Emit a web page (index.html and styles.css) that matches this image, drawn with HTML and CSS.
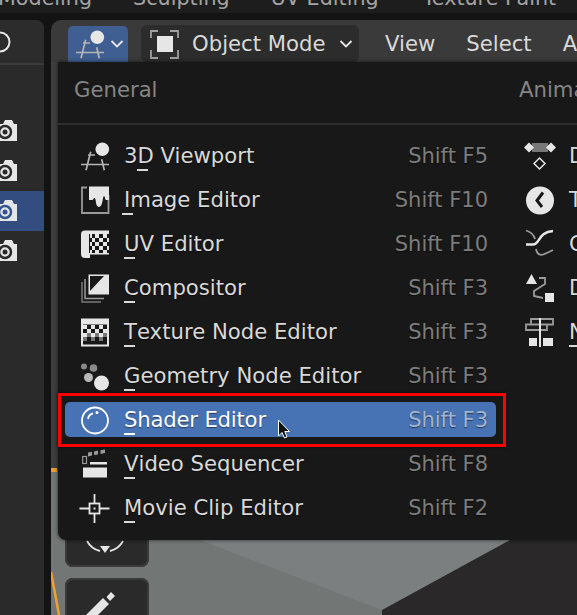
FILE: index.html
```html
<!DOCTYPE html>
<html lang="en">
<head>
<meta charset="UTF-8">
<title>Editor Type Menu</title>
<link rel="stylesheet" href="styles.css">
</head>
<body>

<div class="topbar">
    <span class="tab tab-model">Modeling</span>
    <span class="tab">Sculpting</span>
    <span class="tab">UV Editing</span>
    <span class="tab tab-last">Texture Paint</span>
</div>

<div class="workspace">
    <aside class="outliner">
        <div class="outliner-head">
            <svg class="ring" width="12" height="22" viewBox="0 0 12 22"><circle cx="0" cy="11" r="9.500" fill="none" stroke="#e6e6e6" stroke-width="2"/></svg>
        </div>
        <div class="cam-row"><svg width="18" height="24" viewBox="0 0 18 24"><use href="#cam"/></svg></div>
        <div class="cam-row"><svg width="18" height="24" viewBox="0 0 18 24"><use href="#cam"/></svg></div>
        <div class="cam-row cam-on"><svg width="18" height="24" viewBox="0 0 18 24"><path d="M0 5H3L5 1H12L14 5H17V22H0Z" fill="#e6e6e6"/><circle cx="5" cy="13" r="6" fill="none" stroke="#34558f" stroke-width="2.500"/><circle cx="5" cy="13" r="2.500" fill="#34558f"/></svg></div>
        <div class="cam-row"><svg width="18" height="24" viewBox="0 0 18 24"><use href="#cam"/></svg></div>
    </aside>

    <main class="viewport">
        <header class="vp-header">
            <button class="editor-btn">
                <svg width="30" height="30" viewBox="0 0 30 30"><use href="#i-view3d"/></svg>
                <svg width="14" height="10" viewBox="0 0 14 10"><path d="M1.500 2L7 7.500L12.500 2" fill="none" stroke="#e6e6e6" stroke-width="1.800"/></svg>
            </button>
            <button class="mode-btn">
                <svg width="30" height="30" viewBox="0 0 30 30">
                    <path d="M9 2H2V9M21 2H29V9M9 29H2V21M21 29H29V21" fill="none" stroke="#a0a0a0" stroke-width="1.800"/>
                    <rect x="8" y="7" width="16" height="16" fill="#e6e6e6"/>
                </svg>
                <span>Object Mode</span>
                <svg width="14" height="10" viewBox="0 0 14 10"><path d="M1.500 2L7 7.500L12.500 2" fill="none" stroke="#e6e6e6" stroke-width="1.800"/></svg>
            </button>
            <span class="vp-link link-view">View</span>
            <span class="vp-link">Select</span>
            <span class="vp-link">Add</span>
        </header>

        <div class="scene">
            <svg class="scene-bg" width="526" height="553" viewBox="0 0 526 553">
                <rect width="526" height="553" fill="#7b7f80"/>
                <polygon points="0,0 149,478 331,548 331,553 0,553" fill="#727675"/>
                <polygon points="331,548 459,478 526,478 526,553 331,553" fill="#2a2828"/>
                <rect width="8" height="408" fill="#3e3e3e"/>
                <path d="M0 408H6" stroke="#f0a030" stroke-width="4"/>
                <path d="M0 510L8 553" stroke="#f0a030" stroke-width="2.500"/>
            </svg>
            <div class="tools">
                <div class="tool">
                    <svg width="84" height="84" viewBox="0 0 84 84">
                        <path d="M22 58A20 20 0 0 0 35 68M45 68A20 20 0 0 0 58 58" fill="none" stroke="#e6e6e6" stroke-width="1.800"/>
                        <polygon points="35,63 45,63 40,70" fill="#e6e6e6"/>
                    </svg>
                </div>
                <div class="tool">
                    <svg width="84" height="84" viewBox="0 0 84 84">
                        <path d="M38 20L44 26L22 48L16 42Z" fill="#e6e6e6"/>
                        <path d="M46 14L50 18L45 23L41.500 19Z" fill="#e6e6e6"/>
                    </svg>
                </div>
            </div>
        </div>

        <div class="menu">
            <section class="col col-general">
                <h2 class="col-head">General</h2>
                <div class="rows">
                    <div class="row"><svg class="ico" width="30" height="30" viewBox="0 0 30 30"><use href="#i-view3d"/></svg><span class="label">3<u>D</u> Viewport</span><span class="keys">Shift F5</span></div>
                    <div class="row"><svg class="ico" width="30" height="30" viewBox="0 0 30 30">
                        <path d="M7 2.500H2V28H28.500V10" fill="none" stroke="#9a9a9a" stroke-width="1.800"/>
                        <path d="M9 1.500H29V15H26C25 15 25 11 24 11C22.500 11 23 22 19 22C15 22 16.500 13 14.500 13C13 13 14 15 12 15H9Z" fill="#e6e6e6"/>
                    </svg><span class="label"><u class="tight">I</u>mage Editor</span><span class="keys">Shift F10</span></div>
                    <div class="row"><svg class="ico" width="30" height="30" viewBox="0 0 30 30">
                        <path d="M1 5Q1 1.500 5 1.500H29V5H9V25H29V25H10V29H5Q1 29 1 25Z" fill="#e6e6e6"/>
                        <path d="M10 5h2v4h-2zM15 5h4v4h-4zM23 5h4v4h-4zM10 13h2v4h-2zM15 13h4v4h-4zM23 13h4v4h-4zM10 21h2v4h-2zM15 21h4v4h-4zM23 21h4v4h-4z" fill="#e6e6e6"/>
                        <path d="M12 9h3v4h-3zM19 9h4v4h-4zM27 9h2v4h-2zM12 17h3v4h-3zM19 17h4v4h-4zM27 17h2v4h-2z" fill="#e6e6e6"/>
                        <rect x="9" y="24" width="20" height="1.500" fill="#e6e6e6"/>
                    </svg><span class="label"><u>U</u>V Editor</span><span class="keys">Shift F10</span></div>
                    <div class="row"><svg class="ico" width="30" height="30" viewBox="0 0 30 30">
                        <path d="M2 9V29H21" fill="none" stroke="#7a7a7a" stroke-width="1.500"/>
                        <path d="M5 6V25.500H24" fill="none" stroke="#9a9a9a" stroke-width="1.500"/>
                        <rect x="8.500" y="1.500" width="20.500" height="20" fill="#e6e6e6"/>
                        <polygon points="10,3 24,3 10,18" fill="#181818"/>
                    </svg><span class="label"><u>C</u>ompositor</span><span class="keys">Shift F3</span></div>
                    <div class="row"><svg class="ico" width="30" height="30" viewBox="0 0 30 30">
                        <rect x="1" y="1.500" width="28" height="28" fill="#e6e6e6"/>
                        <rect x="3" y="7.500" width="24" height="20" fill="#181818"/>
                        <path d="M3 8h4v4h-4zM11 8h4v4h-4zM19 8h4v4h-4zM7 12h4v4h-4zM15 12h4v4h-4zM23 12h4v4h-4zM3 16h4v4h-4zM11 16h4v4h-4zM19 16h4v4h-4z" fill="#e6e6e6"/>
                        <path d="M7 16h4v4h-4zM15 16h4v4h-4zM23 16h4v4h-4zM3 20h4v4h-4zM11 20h4v4h-4zM19 20h4v4h-4z" fill="#777"/>
                    </svg><span class="label"><u>T</u>exture Node Editor</span><span class="keys">Shift F3</span></div>
                    <div class="row"><svg class="ico" width="30" height="30" viewBox="0 0 30 30">
                        <circle cx="4" cy="5.500" r="3" fill="#8a8a8a"/>
                        <circle cx="13.500" cy="7" r="3.800" fill="#8a8a8a"/>
                        <circle cx="8.500" cy="16.500" r="4.500" fill="#b8b8b8"/>
                        <circle cx="21.500" cy="22" r="7.500" fill="#e6e6e6"/>
                    </svg><span class="label"><u>G</u>eometry Node Editor</span><span class="keys">Shift F3</span></div>
                    <div class="row row-hot"><svg class="ico" width="30" height="30" viewBox="0 0 30 30">
                        <circle cx="15" cy="15.500" r="13" fill="none" stroke="#fff" stroke-width="1.800"/>
                        <path d="M8 14C8.500 11 10.500 9 13 8.500" fill="none" stroke="#fff" stroke-width="1.800"/>
                        <circle cx="17" cy="7.500" r="1.500" fill="#fff"/>
                    </svg><span class="label"><u>S</u>hader Editor</span><span class="keys">Shift F3</span>
                        <svg class="pointer" width="14" height="20" viewBox="0 0 14 20"><path d="M1.500 1V17L5 13.500L7.500 19L10 18L7.800 12.500H12.500Z" fill="#111" stroke="#fff" stroke-width="1"/></svg>
                    </div>
                    <div class="row"><svg class="ico" width="30" height="30" viewBox="0 0 30 30">
                        <path d="M8 3.500L12 2.700V6.500L8 7.500ZM14 2.400L18 1.600V5.400L14 6.100ZM20.500 1.200L25 .5V4L20.500 5Z" fill="#9a9a9a"/>
                        <rect x="2.700" y="7.500" width="3.800" height="7" fill="none" stroke="#9a9a9a" stroke-width="1.200"/>
                        <rect x="10" y="13" width="17" height="2.500" fill="#e6e6e6"/>
                        <rect x="3" y="18.500" width="24" height="10" fill="#e6e6e6"/>
                    </svg><span class="label"><u>V</u>ideo Sequencer</span><span class="keys">Shift F8</span></div>
                    <div class="row"><svg class="ico" width="30" height="30" viewBox="0 0 30 30">
                        <path d="M14.500 1V10M14.500 21V30M-.5 15.500H9M20 15.500H29.500" stroke="#e6e6e6" stroke-width="1.800"/>
                        <rect x="9.500" y="10.500" width="10" height="10" fill="none" stroke="#e6e6e6" stroke-width="1.800"/>
                        <rect x="13.500" y="14.500" width="2" height="2" fill="#e6e6e6"/>
                    </svg><span class="label"><u>M</u>ovie Clip Editor</span><span class="keys">Shift F2</span></div>
                </div>
            </section>
            <section class="col">
                <h2 class="col-head col-head-second">Animation</h2>
                <div class="rows">
                    <div class="row"><svg class="ico" width="30" height="30" viewBox="0 0 30 30">
                        <rect x="7" y="2" width="16" height="9" fill="#777"/>
                        <polygon points="4,1.500 9,6.500 4,11.500 -1,6.500" fill="#e6e6e6"/>
                        <polygon points="26,1.500 31,6.500 26,11.500 21,6.500" fill="#e6e6e6"/>
                        <polygon points="14.500,17 20,22.500 14.500,28 9,22.500" fill="none" stroke="#e6e6e6" stroke-width="1.500"/>
                    </svg><span class="label">Dope Sheet</span></div>
                    <div class="row"><svg class="ico" width="30" height="30" viewBox="0 0 30 30">
                        <circle cx="15" cy="15.500" r="14" fill="#e6e6e6"/>
                        <path d="M18 7.500L12 15.500L17 22" fill="none" stroke="#181818" stroke-width="3"/>
                    </svg><span class="label">Timeline</span></div>
                    <div class="row"><svg class="ico" width="30" height="30" viewBox="0 0 30 30">
                        <path d="M1 1.500C6 3 9 6 10 10" fill="none" stroke="#9a9a9a" stroke-width="1.800"/>
                        <path d="M1 15.500H8C15 15.500 13 3 28 2" fill="none" stroke="#e6e6e6" stroke-width="2.500"/>
                        <path d="M11 20C13 30 20 25 28 21" fill="none" stroke="#9a9a9a" stroke-width="1.800"/>
                    </svg><span class="label">Graph Editor</span></div>
                    <div class="row"><svg class="ico" width="30" height="30" viewBox="0 0 30 30">
                        <polygon points="6.500,1 12,11 1,11" fill="#e6e6e6"/>
                        <rect x="20" y="20" width="9" height="9" fill="#e6e6e6"/>
                        <path d="M14 5H20V11L9 18V23L18 25" fill="none" stroke="#9a9a9a" stroke-width="1.800"/>
                    </svg><span class="label">Drivers</span></div>
                    <div class="row"><svg class="ico" width="30" height="30" viewBox="0 0 30 30">
                        <path d="M14 2H6V7.500H1V13H14M6 7.500H14M16 2H28V7.500H22V13H16M16 7.500H22" fill="none" stroke="#9a9a9a" stroke-width="1.800"/>
                        <rect x="14" y="1" width="2" height="29" fill="#e6e6e6"/>
                        <rect x="4" y="21" width="8" height="8" fill="#e6e6e6"/>
                        <rect x="18" y="21" width="10" height="8" fill="#e6e6e6"/>
                    </svg><span class="label"><u>N</u>onlinear Animation</span></div>
                </div>
            </section>
        </div>
    </main>
</div>

<svg class="defs" width="0" height="0">
    <defs>
        <g id="cam">
            <path d="M0 5H3L5 1H12L14 5H17V22H0Z" fill="#e6e6e6"/>
            <circle cx="5" cy="13" r="6" fill="none" stroke="#2a2a2a" stroke-width="2.500"/>
            <circle cx="5" cy="13" r="2.500" fill="#2a2a2a"/>
        </g>
        <g id="i-view3d">
            <path d="M10.700 10.700L6 29.300M21.700 18.300L24.300 29.300M1 23.500H29M8 14H15" stroke="#b4b4b4" stroke-width="1.700" fill="none"/>
            <circle cx="22.300" cy="8.300" r="6.800" fill="#e6e6e6"/>
        </g>
    </defs>
</svg>

</body>
</html>
```

FILE: styles.css
```css
body {
    margin: 0;
    width: 577px;
    height: 615px;
    overflow: hidden;
    background: #131313;
    font-family: 'DejaVu Sans', sans-serif;
    font-size: 21.2px;
    color: #d9d9d9;
}
.topbar {
    height: 13px;
    background: #1d1d1d;
    display: flex;
    align-items: flex-end;
    gap: 41px;
    overflow: hidden;
    color: #a3a3a3;
    font-size: 20.7px;
}
.tab {
    white-space: nowrap;
    line-height: 26px;
    margin-bottom: 2px;
    flex: none;
}
.tab-model {
    margin-left: -2px;
}
.tab-last {
    margin-left: 3px;
}
.workspace {
    display: flex;
    margin-top: 7px;
    gap: 7px;
    height: 595px;
}
.outliner {
    width: 44px;
    flex: none;
    background: #2a2a2a;
    border-top-right-radius: 8px;
}
.outliner-head {
    height: 43px;
    border-bottom: 2px solid #3a3a3a;
    margin-bottom: 46px;
    background: #2c2c2c;
    border-top-right-radius: 8px;
    display: flex;
    align-items: center;
}
.cam-row {
    height: 40px;
    display: flex;
    align-items: center;
}
.cam-row svg {
    display: block;
}
.cam-on {
    background: #334d80;
}
.viewport {
    flex: 1;
    position: relative;
    min-width: 0;
    border-top-left-radius: 10px;
    overflow: hidden;
}
.vp-header {
    height: 42px;
    background: #3a3a3a;
    display: flex;
    align-items: flex-end;
    padding-left: 17px;
}
.editor-btn {
    flex: none;
    width: 60px;
    height: 36px;
    background: #3f5f92;
    border: none;
    border-radius: 5px 5px 0 0;
    padding: 0 0 0 7px;
    display: flex;
    align-items: center;
    gap: 5px;
}
.mode-btn {
    flex: none;
    width: 218px;
    height: 37px;
    margin-left: 13px;
    background: #2c2c2c;
    border: none;
    border-radius: 6px;
    padding: 0 0 0 8px;
    display: flex;
    align-items: center;
    font: inherit;
    color: #d9d9d9;
}
.mode-btn span {
    margin: 0 14px 0 13px;
    white-space: nowrap;
}
.vp-link {
    flex: none;
    line-height: 37px;
    margin-left: 31px;
    white-space: nowrap;
}
.link-view {
    margin-left: 26px;
}
.scene {
    position: relative;
    height: 553px;
    overflow: hidden;
}
.scene-bg {
    position: absolute;
    left: 0;
    top: 0;
}
.tools {
    position: relative;
    padding: 421px 0 0 14px;
    display: flex;
    flex-direction: column;
    gap: 11px;
}
.tool {
    width: 84px;
    height: 84px;
    flex: none;
    background: #2a2a2a;
    box-shadow: inset 0 0 0 2px #3a3a3a;
    border-radius: 8px;
}
.tool svg {
    display: block;
}
.menu {
    position: absolute;
    left: 7px;
    top: 42px;
    width: 620px;
    height: 478px;
    display: flex;
    background: #181818;
    border-radius: 0 0 8px 8px;
    box-shadow: 0 0 4px rgba(0,0,0,0.6);
}
.col {
    width: 168px;
}
.col-general {
    width: 452px;
    flex: none;
}
.col-head {
    margin: 0;
    height: 61px;
    padding-left: 16px;
    font: inherit;
    line-height: 55px;
    color: #858585;
    border-bottom: 2px solid #2e2e2e;
    white-space: nowrap;
}
.col-head-second {
    padding-left: 9px;
}
.rows {
    padding: 13px 14px 0 7px;
    display: flex;
    flex-direction: column;
    gap: 9px;
}
.col:not(.col-general) .rows {
    padding-left: 0;
    padding-right: 0;
}
.row {
    position: relative;
    height: 35px;
    display: flex;
    align-items: center;
    padding: 0 8px 0 15px;
    border-radius: 5px;
    white-space: nowrap;
    text-shadow: 0 1px 1px rgba(0,0,0,0.5);
}
.ico {
    flex: none;
    margin-right: 14px;
    overflow: visible;
}
.label {
    flex: 1;
}
.label u {
    text-decoration: none;
    position: relative;
}
.label u::after {
    content: "";
    position: absolute;
    left: 0;
    bottom: -3px;
    width: 11px;
    height: 2px;
    background: #d9d9d9;
}
.label u.tight::after {
    left: -2px;
}
.keys {
    color: #7d7d7d;
    font-size: 21px;
}
.row-hot {
    background: #4772b3;
    color: #fff;
}
.row-hot .label {
    letter-spacing: -0.2px;
}
.row-hot .keys {
    color: #a3b4cf;
}
.row-hot .label u::after {
    background: #fff;
}
/* red annotation box around the hovered entry */
.row-hot::after {
    content: "";
    position: absolute;
    left: -7px;
    top: -9px;
    right: -10px;
    bottom: -10px;
    border: 3px solid #ff0000;
    box-shadow: 0 0 3px rgba(0,0,0,0.6);
}
.pointer {
    position: absolute;
    left: 212px;
    top: 17px;
}
.defs {
    position: absolute;
}
```
